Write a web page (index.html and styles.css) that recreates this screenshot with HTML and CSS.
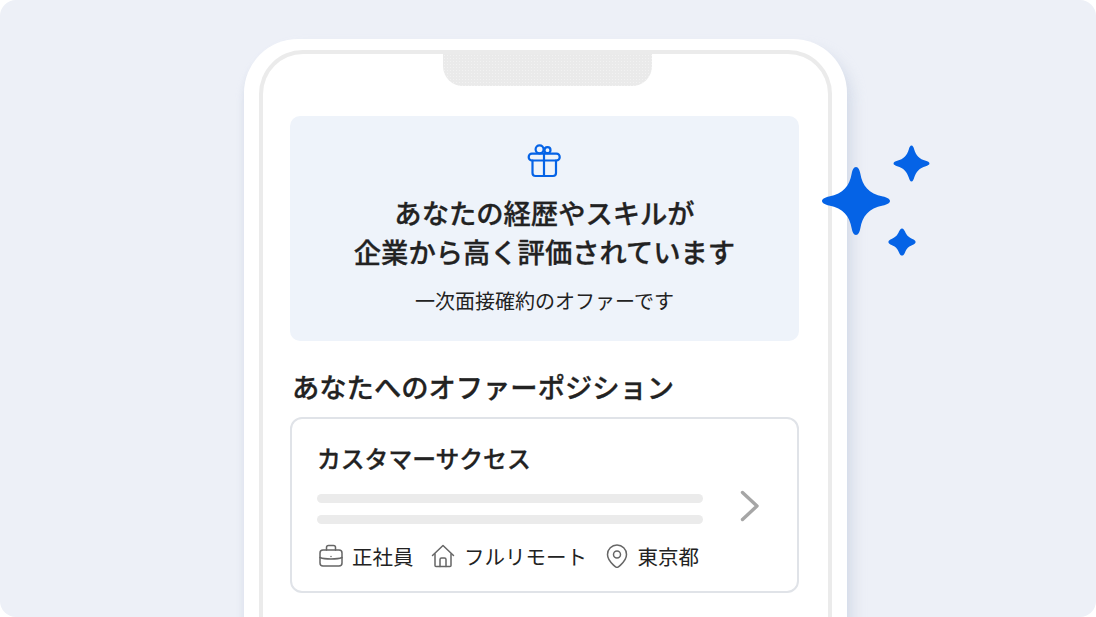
FILE: index.html
```html
<!DOCTYPE html>
<html lang="ja">
<head>
<meta charset="utf-8">
<title>オファー</title>
<link rel="stylesheet" href="styles.css">
</head>
<body>
<main class="stage">
  <div class="phone">
    <div class="frame">
      <div class="notch"></div>
      <section class="hero">
        <svg class="gift" viewBox="0 0 34 34" fill="none" stroke="#0563e6" stroke-width="2.200" stroke-linejoin="round" stroke-linecap="round">
          <circle cx="12.600" cy="5.300" r="4"/>
          <circle cx="20.500" cy="6.200" r="3"/>
          <rect x="1.700" y="9.700" width="31" height="6.800" rx="3.200"/>
          <path d="M5.500 16.500v12.500a3 3 0 0 0 3 3h17.500a3 3 0 0 0 3-3V16.500"/>
          <path d="M17 9.700v22.300"/>
        </svg>
        <h1 class="hero-title">あなたの経歴やスキルが<br>企業から高く評価されています</h1>
        <p class="hero-sub">一次面接確約のオファーです</p>
      </section>
      <h2 class="section-title">あなたへのオファーポジション</h2>
      <article class="card">
        <div class="card-main">
          <h3 class="card-title">カスタマーサクセス</h3>
          <div class="line"></div>
          <div class="line"></div>
          <ul class="tags">
            <li class="tag">
              <svg class="tag-icon" viewBox="0 0 24 24" fill="none" stroke="#666" stroke-width="1.500" stroke-linejoin="round" stroke-linecap="round">
                <rect x="1" y="6" width="22" height="16" rx="3"/>
                <path d="M7.500 6V3.500a2 2 0 0 1 2-2h5a2 2 0 0 1 2 2V6"/>
                <path d="M1 13.500c3 1.200 6.500 1.500 11 1.500s8-.3 11-1.500M12 12.500h.01"/>
              </svg>
              <span>正社員</span>
            </li>
            <li class="tag">
              <svg class="tag-icon" viewBox="0 0 24 24" fill="none" stroke="#666" stroke-width="1.500" stroke-linejoin="round" stroke-linecap="round">
                <path d="M1.500 11.500L12 1.500l10.500 10"/>
                <path d="M4 10v11.500a1 1 0 0 0 1 1h14a1 1 0 0 0 1-1V10"/>
                <path d="M9 22.500v-7a1.500 1.500 0 0 1 1.500-1.500h3a1.500 1.500 0 0 1 1.500 1.500v7"/>
              </svg>
              <span>フルリモート</span>
            </li>
            <li class="tag">
              <svg class="tag-icon" viewBox="0 0 24 24" fill="none" stroke="#666" stroke-width="1.500" stroke-linejoin="round">
                <path d="M12 23.500c-1 0-2-1-3.500-2.400C5.500 18.300 2.500 15 2.500 10.500a9.500 9.500 0 0 1 19 0c0 4.500-3 7.800-6 10.600-1.500 1.400-2.500 2.400-3.500 2.400z"/>
                <circle cx="12" cy="10.500" r="3.500"/>
              </svg>
              <span>東京都</span>
            </li>
          </ul>
        </div>
        <svg class="chevron" viewBox="0 0 20 32" fill="none" stroke="#a6a6a6" stroke-width="3.400" stroke-linecap="round" stroke-linejoin="round">
          <path d="M2.500 2.500L17 16 2.500 29.500"/>
        </svg>
      </article>
    </div>
  </div>
  <svg class="sparkle sparkle-big" viewBox="0 0 70 70"><path class="spark" d="M35 1c2.400 0 3.600 3 4.300 6.500C41.500 20 47.500 27.500 62 30.500c3.500.7 7 2.300 7 4.500s-3.500 3.800-7 4.500C47.500 42.500 41.500 50 39.300 62.500c-.7 3.500-1.900 6.500-4.300 6.500s-3.600-3-4.300-6.500C28.500 50 22.500 42.500 8 39.500c-3.500-.7-7-2.300-7-4.500s3.500-3.800 7-4.500C22.500 27.500 28.500 20 30.700 7.500c.7-3.500 1.900-6.500 4.300-6.500z"/></svg>
  <svg class="sparkle sparkle-top" viewBox="0 0 70 70"><path class="spark" d="M35 1c2.500 0 4 3.500 5 7C43.500 20 50 26.500 62 30c3.500 1 7 2.500 7 5s-3.500 4-7 5C50 43.500 43.500 50 40 62c-1 3.500-2.500 7-5 7s-4-3.500-5-7C26.500 50 20 43.500 8 40c-3.500-1-7-2.500-7-5s3.500-4 7-5C20 26.500 26.500 20 30 8c1-3.500 2.500-7 5-7z"/></svg>
  <svg class="sparkle sparkle-low" viewBox="0 0 70 70"><path class="spark" d="M35 1c3.500 0 5.500 4 7.500 8C47 19 51 23 61 27.500c4 2 8 4 8 7.500s-4 5.500-8 7.500C51 47 47 51 42.500 61c-2 4-4 8-7.500 8s-5.500-4-7.500-8C23 51 19 47 9 42.500c-4-2-8-4-8-7.500s4-5.500 8-7.500C19 23 23 19 27.500 9c2-4 4-8 7.500-8z"/></svg>
</main>
</body>
</html>
```

FILE: styles.css
```css
* {
  box-sizing: border-box;
}

html,
body {
  margin: 0;
  padding: 0;
  background: #fff;
}

body {
  font-family: "Noto Sans CJK JP", "Noto Sans", sans-serif;
  color: #222;
}

.stage {
  position: relative;
  width: 1096px;
  height: 617px;
  padding: 39px 0 0 244px;
  background: #edf0f7;
  border-radius: 16px;
  overflow: hidden;
}

.phone {
  width: 603px;
  height: 640px;
  padding: 11px 15px 0;
  background: #fff;
  border-radius: 54px 54px 0 0;
  box-shadow: -1px 8px 7px rgba(196, 204, 222, 0.4), 8px 8px 12px rgba(196, 204, 222, 0.4);
}

.frame {
  height: 620px;
  padding: 0 29px 0 27px;
  border: 4px solid #ebebeb;
  border-bottom: 0;
  border-radius: 44px 44px 0 0;
}

.notch {
  width: 209px;
  height: 32px;
  margin-left: 153px;
  background-color: #eaeaea;
  background-image: radial-gradient(circle, #f2f2f2 0.6px, transparent 0.8px);
  background-size: 3px 3px;
  border-radius: 0 0 20px 20px;
}

.hero {
  display: flex;
  flex-direction: column;
  align-items: center;
  height: 225px;
  margin-top: 30px;
  padding-top: 28px;
  background: #eef3fa;
  border-radius: 10px;
}

.gift {
  display: block;
  width: 34px;
  height: 34px;
  margin-right: 2px;
}

.hero-title {
  margin: 15px 0 0;
  font-size: 27.300px;
  font-weight: 500;
  line-height: 39px;
  text-align: center;
  -webkit-text-stroke: 0.3px #222;
}

.hero-sub {
  margin: 15px 0 0;
  font-size: 20px;
  line-height: 30px;
}

.section-title {
  margin: 25px 0 0 2px;
  font-size: 27.300px;
  font-weight: 500;
  line-height: 40px;
  -webkit-text-stroke: 0.3px #222;
}

.card {
  display: flex;
  align-items: center;
  justify-content: space-between;
  height: 176px;
  margin-top: 11px;
  padding: 2px 37px 0 25px;
  border: 2px solid #e0e3e8;
  border-radius: 12px;
}

.card-main {
  width: 386px;
}

.card-title {
  margin: 0 0 18px;
  font-size: 23.800px;
  font-weight: 500;
  line-height: 36px;
  -webkit-text-stroke: 0.3px #222;
}

.line {
  height: 9px;
  margin-bottom: 12px;
  background: #ebebeb;
  border-radius: 5px;
}

.tags {
  display: flex;
  gap: 17.500px;
  margin: 17px 0 1px 2px;
  padding: 0;
  list-style: none;
}

.tag {
  display: flex;
  align-items: center;
  gap: 9px;
  font-size: 20.500px;
  line-height: 30px;
  white-space: nowrap;
}

.tag-icon {
  display: block;
  width: 24px;
  height: 24px;
  flex: none;
}

.chevron {
  display: block;
  width: 20px;
  height: 32px;
  flex: none;
}

.sparkle {
  position: absolute;
  display: block;
}

.spark {
  fill: #0563e6;
}

.sparkle-big {
  left: 821px;
  top: 166px;
  width: 70px;
  height: 70px;
}

.sparkle-top {
  left: 893px;
  top: 145px;
  width: 37px;
  height: 37px;
}

.sparkle-low {
  left: 888px;
  top: 228px;
  width: 28px;
  height: 28px;
}
```
